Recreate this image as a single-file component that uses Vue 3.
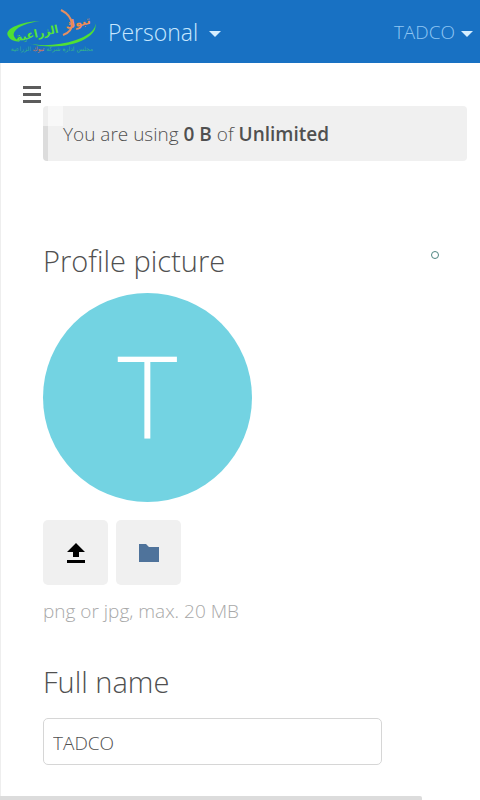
<template>
  <div class="page">
    <header class="header">
      <a class="logo" href="#" aria-label="TADCO">
        <svg viewBox="0 0 92 48" width="92" height="48" aria-hidden="true">
          <path
            d="M34 13 C12 14 -2 22 2 28 C4 32 8 33 14 34 C8 30 6 27 9 23 C13 18 21 15 34 13 Z"
            fill="#50e033"
          />
          <path
            d="M88 14 C92 19 85 27 70 32 C55 37 35 39 21 35 C42 41 65 39 79 31 C88 26 92 19 88 14 Z"
            fill="#50e033"
          />
          <path
            d="M55 2 Q65 7 66 16 Q66 24 57 27"
            fill="none"
            stroke="#e58f62"
            stroke-width="2"
          />
          <g transform="rotate(-12 46 24)" class="logo-title" text-anchor="middle">
            <text x="31" y="26" fill="#55e338">{{ logo.second }}</text>
            <text x="73" y="24" fill="#ef8d52">{{ logo.first }}</text>
          </g>
          <text x="46" y="43" class="logo-caption" direction="rtl" text-anchor="middle">
            {{ logo.caption }} <tspan fill="#e07a4c">{{ logo.first }}</tspan> {{ logo.second }}
          </text>
        </svg>
      </a>
      <button class="app-menu" type="button">
        Personal
        <span class="caret"></span>
      </button>
      <button class="user-menu" type="button">
        {{ user }}
        <span class="caret"></span>
      </button>
    </header>

    <main class="content">
      <button class="nav-toggle" type="button" aria-label="Navigation">
        <svg viewBox="0 0 18 18" width="18" height="18">
          <path d="M0 0h18v3H0zM0 7h18v3H0zM0 14h18v3H0z" fill="#5c5c5c" />
        </svg>
      </button>

      <p class="quota">You are using <strong>0 B</strong> of <strong>Unlimited</strong></p>

      <section class="profile">
        <div class="heading-row">
          <h2>Profile picture</h2>
          <span class="scope"></span>
        </div>
        <div class="avatar">{{ initial }}</div>
        <div class="actions">
          <button type="button" aria-label="Upload new">
            <svg viewBox="0 0 20 22" width="20" height="22">
              <path d="M10 1L19 10H13V15H7V10H1ZM1 18H19V21H1Z" fill="#000" />
            </svg>
          </button>
          <button type="button" aria-label="Select from Files">
            <svg viewBox="0 0 22 20" width="22" height="20">
              <path d="M1 1H8L11 4H21V19H1Z" fill="#4f739b" />
            </svg>
          </button>
        </div>
        <p class="hint">png or jpg, max. 20 MB</p>
      </section>

      <section class="field">
        <h2><label for="displayname">Full name</label></h2>
        <input id="displayname" v-model="user" type="text" autocomplete="off" />
      </section>
    </main>

    <div class="scrollbar"></div>
  </div>
</template>

<script setup>
import { computed, ref } from 'vue'

const user = ref('TADCO')
const initial = computed(() => user.value.charAt(0))

const logo = {
  first: 'تبوك',
  second: 'الزراعية',
  caption: 'مجلس ادارة شركة'
}
</script>

<style>
body {
  margin: 0;
  background: #fff;
}
</style>

<style scoped>
.page {
  min-height: 100vh;
  box-sizing: border-box;
  color: #505050;
  font-family: 'Open Sans', 'DejaVu Sans', sans-serif;
  font-size: 19px;
  font-weight: 300;
}

button {
  margin: 0;
  border: 0;
  font: inherit;
  cursor: pointer;
}

.header {
  display: flex;
  align-items: center;
  height: 63px;
  padding: 0 7px 0 6px;
  background: #1871c3;
}

.logo {
  display: flex;
  margin-right: 10px;
}

.logo-title {
  font-family: 'DejaVu Sans', sans-serif;
  font-size: 11px;
  font-weight: 700;
}

.logo-caption {
  font-family: 'DejaVu Sans', sans-serif;
  font-size: 6px;
  font-weight: 400;
  fill: #35b58a;
}

.app-menu,
.user-menu {
  display: flex;
  align-items: center;
  padding: 0;
  background: none;
}

.app-menu {
  gap: 11px;
  color: #c7e8ff;
  font-size: 23px;
}

.user-menu {
  gap: 6px;
  margin-left: auto;
  color: #8fc6f3;
}

.caret {
  margin-top: 4px;
  border: 6px solid transparent;
  border-top-color: #d5eeff;
  border-bottom: 0;
}

.content {
  position: relative;
  padding: 43px 13px 35px 42px;
  border-left: 1px solid #eee;
}

.nav-toggle {
  position: absolute;
  top: 0;
  left: 0;
  display: flex;
  align-items: center;
  justify-content: center;
  width: 62px;
  height: 63px;
  padding: 0;
  background: rgba(255, 255, 255, 0.5);
}

.quota {
  margin: 0;
  padding: 15px 15px 14px;
  border-left: 5px solid #dcdcdc;
  border-radius: 4px;
  background: #f0f0f0;
  line-height: 26px;
}

.quota strong {
  font-weight: 600;
}

.profile {
  margin-top: 80px;
}

h2 {
  margin: 0;
  font-size: 29px;
  font-weight: 300;
  line-height: 40px;
}

.heading-row {
  display: flex;
  align-items: center;
  justify-content: space-between;
  padding-right: 28px;
}

.scope {
  width: 6px;
  height: 6px;
  margin-bottom: 12px;
  border: 1px solid #4d8580;
  border-radius: 50%;
}

.avatar {
  width: 209px;
  height: 209px;
  margin-top: 12px;
  border-radius: 50%;
  background: #73d3e2;
  color: #fff;
  font-size: 115px;
  line-height: 204px;
  text-align: center;
}

.actions {
  display: flex;
  gap: 8px;
  margin-top: 18px;
}

.actions button {
  display: flex;
  align-items: center;
  justify-content: center;
  width: 65px;
  height: 65px;
  padding: 0;
  border-radius: 5px;
  background: #f0f0f0;
}

.hint {
  margin: 13px 0 0;
  color: #a8a8a8;
  line-height: 26px;
}

.field {
  margin-top: 38px;
}

.field input {
  display: block;
  width: 80%;
  height: 47px;
  margin-top: 16px;
  padding: 2px 9px 0;
  box-sizing: border-box;
  border: 1px solid #d6d6d6;
  border-radius: 5px;
  background: #fff;
  color: #505050;
  font: inherit;
}

.scrollbar {
  position: fixed;
  bottom: 0;
  left: 0;
  width: 88%;
  height: 4px;
  border-radius: 0 2px 0 0;
  background: #dcdcdc;
}
</style>
